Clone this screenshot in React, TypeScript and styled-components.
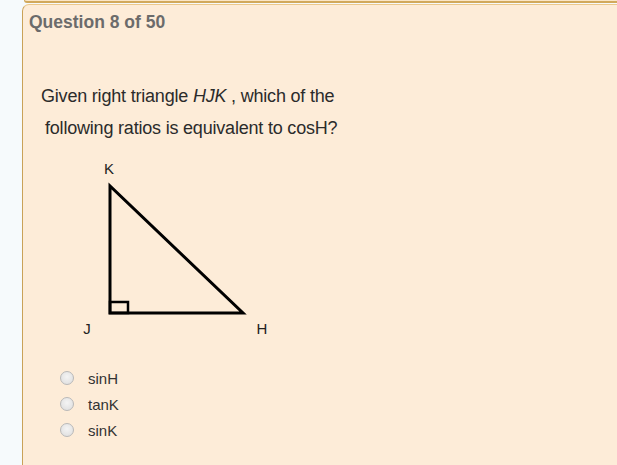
import React from 'react'
import styled, { createGlobalStyle } from 'styled-components'

const Global = createGlobalStyle`
  html, body {
    margin: 0;
    padding: 0;
    background: #f6fafc;
    overflow: hidden;
  }
  body {
    font-family: "Liberation Sans", Arial, sans-serif;
  }
`

const Page = styled.div`
  width: 617px;
  height: 465px;
  padding-left: 22px;
  box-sizing: border-box;
  overflow: hidden;
`

const PrevCard = styled.div`
  width: 620px;
  height: 3px;
  background: #fbe6c6;
  border-bottom: 2px solid #d1a95c;
  border-left: 1px solid #d1a95c;
  border-radius: 0 0 0 6px;
  box-sizing: border-box;
  margin-left: 2px;
  margin-bottom: 1px;
`

const Card = styled.div`
  width: 640px;
  height: 500px;
  background: #fdecd8;
  border: 1px solid #c9a258;
  border-top-color: #ecc98c;
  border-right: none;
  border-radius: 7px 0 0 0;
  box-sizing: border-box;
  padding: 7px 0 0 6px;
`

const Title = styled.div`
  font-size: 17.5px;
  font-weight: bold;
  color: #6b6b6b;
  line-height: 20px;
`

const Prompt = styled.div`
  margin: 48px 0 0 12px;
  font-family: Arial, "Liberation Sans", sans-serif;
  font-size: 18px;
  color: #2b2b2b;
  letter-spacing: -0.2px;
  line-height: 32px;
`

const Line = styled.div<{ $indent?: number }>`
  padding-left: ${(p) => p.$indent ?? 0}px;
  white-space: nowrap;
`

const Figure = styled.svg`
  display: block;
  margin: 7px 0 0 31px;
`

const Choices = styled.div`
  display: flex;
  flex-direction: column;
  gap: 10px;
  margin: 29px 0 0 31px;
`

const Choice = styled.label`
  display: flex;
  align-items: center;
  gap: 9px;
  font-size: 15px;
  color: #333;
  height: 16px;
`

const Radio = styled.span`
  width: 14px;
  height: 14px;
  border-radius: 50%;
  border: 1px solid #b9b9b9;
  background: radial-gradient(circle at 50% 40%, #f4f4f4 0%, #dcdcdc 100%);
  box-sizing: border-box;
  margin-right: 5px;
`

const labelFont = 'Liberation Sans, Arial, sans-serif'

const App = () => {
  const options = ['sinH', 'tanK', 'sinK']
  return (
    <Page>
      <Global />
      <PrevCard />
      <Card>
        <Title>Question 8 of 50</Title>
        <Prompt>
          <Line>
            Given right triangle <i>HJK</i> , which of the
          </Line>
          <Line $indent={4}>following ratios is equivalent to cosH?</Line>
        </Prompt>
        <Figure width="220" height="190" viewBox="0 0 220 190">
          <text x="49" y="23" fontSize="15" fill="#222" fontFamily={labelFont} textAnchor="middle">K</text>
          <path d="M50 35 L50 162 L183 162 Z" fill="none" stroke="#000" strokeWidth="3" strokeLinejoin="miter" />
          <rect x="50" y="151" width="18" height="11" fill="none" stroke="#000" strokeWidth="2.5" />
          <text x="27" y="183" fontSize="15" fill="#222" fontFamily={labelFont} textAnchor="middle">J</text>
          <text x="202" y="183" fontSize="15" fill="#222" fontFamily={labelFont} textAnchor="middle">H</text>
        </Figure>
        <Choices>
          {options.map((o) => (
            <Choice key={o}>
              <Radio />
              {o}
            </Choice>
          ))}
        </Choices>
      </Card>
    </Page>
  )
}

export default App
